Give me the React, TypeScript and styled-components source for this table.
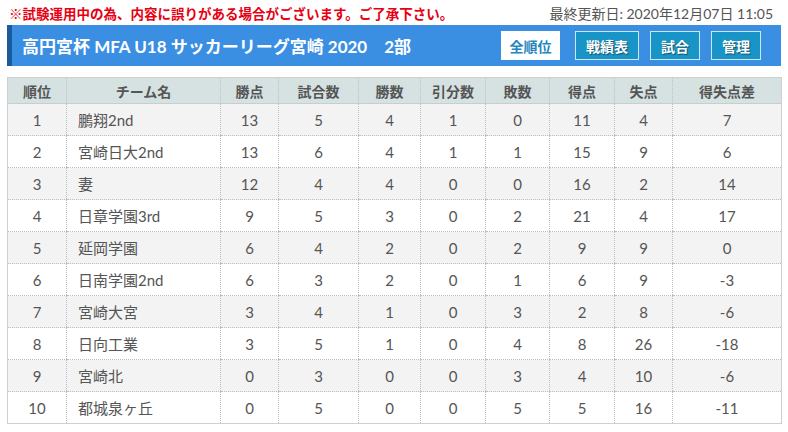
import React from 'react';
import styled, { createGlobalStyle } from 'styled-components';

const GlobalStyle = createGlobalStyle`
    body {
        margin: 0;
        background: #fff;
        font-family: Lato, "Noto Sans CJK JP", sans-serif;
    }
`;

const Page = styled.div`
    padding: 0 7px;
`;

const TopLine = styled.div`
    display: flex;
    justify-content: space-between;
    align-items: center;
    height: 25px;
    font-size: 14px;
`;

const Notice = styled.div`
    color: #e60012;
    font-weight: bold;
    font-size: 13.5px;
    padding-left: 2px;
`;

const Updated = styled.div`
    color: #555;
    padding-right: 8px;
`;

const TitleBar = styled.div`
    display: flex;
    align-items: center;
    justify-content: space-between;
    height: 41px;
    background: #3b8fe3;
    border-left: 5px solid #1c5a9e;
    padding: 0 20px 0 10px;
`;

const Title = styled.h1`
    margin: 0;
    color: #fff;
    font-size: 17px;
    font-weight: bold;
    white-space: pre;
`;

const Nav = styled.div`
    display: flex;
    gap: 11px;
`;

const NavButton = styled.a<{ $active?: boolean }>`
    display: flex;
    align-items: center;
    justify-content: center;
    height: 29px;
    box-sizing: border-box;
    padding: 0 ${p => (p.$active ? 7.5 : 10)}px;
    margin-right: ${p => (p.$active ? 4 : 0)}px;
    font-size: 14px;
    font-weight: bold;
    text-decoration: none;
    border: 1px solid ${p => (p.$active ? '#fff' : '#c9e9f5')};
    background: ${p => (p.$active ? '#fff' : '#1895c6')};
    color: ${p => (p.$active ? '#1e86c0' : '#fff')};
    text-shadow: ${p => (p.$active ? 'none' : '1px 1px 1px rgba(0,0,0,0.45)')};
`;

const Table = styled.table`
    margin-top: 11px;
    width: 774px;
    border-collapse: collapse;
    table-layout: fixed;
    border: 1px solid #cfcfcf;
    color: #555;
`;

const HeadCell = styled.th`
    height: 25px;
    padding: 0;
    background: #d6e2e2;
    color: #555;
    font-size: 14px;
    font-weight: bold;
    border-left: 1px dotted #b8c4c4;
    border-bottom: 1px solid #c4d0d0;
`;

const Row = styled.tr<{ $odd: boolean }>`
    background: ${p => (p.$odd ? '#f3f3f3' : '#fff')};
`;

const Cell = styled.td<{ $left?: boolean }>`
    height: 31px;
    padding: 0 ${p => (p.$left ? '11px' : '0')};
    text-align: ${p => (p.$left ? 'left' : 'center')};
    font-size: 15px;
    color: #555;
    border-left: 1px dotted #bdbdbd;
    border-bottom: 1px dotted #bdbdbd;
`;

const widths = [59, 154, 58, 80, 62, 65, 64, 65, 58, 109];
const heads = ['順位', 'チーム名', '勝点', '試合数', '勝数', '引分数', '敗数', '得点', '失点', '得失点差'];

const rows: (string | number)[][] = [
    [1, '鵬翔2nd', 13, 5, 4, 1, 0, 11, 4, 7],
    [2, '宮崎日大2nd', 13, 6, 4, 1, 1, 15, 9, 6],
    [3, '妻', 12, 4, 4, 0, 0, 16, 2, 14],
    [4, '日章学園3rd', 9, 5, 3, 0, 2, 21, 4, 17],
    [5, '延岡学園', 6, 4, 2, 0, 2, 9, 9, 0],
    [6, '日南学園2nd', 6, 3, 2, 0, 1, 6, 9, -3],
    [7, '宮崎大宮', 3, 4, 1, 0, 3, 2, 8, -6],
    [8, '日向工業', 3, 5, 1, 0, 4, 8, 26, -18],
    [9, '宮崎北', 0, 3, 0, 0, 3, 4, 10, -6],
    [10, '都城泉ヶ丘', 0, 5, 0, 0, 5, 5, 16, -11],
];

export default function App() {
    return (
        <Page>
            <GlobalStyle />
            <TopLine>
                <Notice>※試験運用中の為、内容に誤りがある場合がございます。ご了承下さい。</Notice>
                <Updated>最終更新日: 2020年12月07日 11:05</Updated>
            </TopLine>
            <TitleBar>
                <Title>{'高円宮杯 MFA U18 サッカーリーグ宮崎 2020　2部'}</Title>
                <Nav>
                    <NavButton $active>全順位</NavButton>
                    <NavButton>戦績表</NavButton>
                    <NavButton>試合</NavButton>
                    <NavButton>管理</NavButton>
                </Nav>
            </TitleBar>
            <Table>
                <colgroup>
                    {widths.map((w, i) => <col key={i} style={{ width: w }} />)}
                </colgroup>
                <thead>
                    <tr>
                        {heads.map(h => <HeadCell key={h}>{h}</HeadCell>)}
                    </tr>
                </thead>
                <tbody>
                    {rows.map((r, i) => (
                        <Row key={i} $odd={i % 2 === 0}>
                            {r.map((v, j) => (
                                <Cell key={j} $left={j === 1}>{v}</Cell>
                            ))}
                        </Row>
                    ))}
                </tbody>
            </Table>
        </Page>
    );
}
